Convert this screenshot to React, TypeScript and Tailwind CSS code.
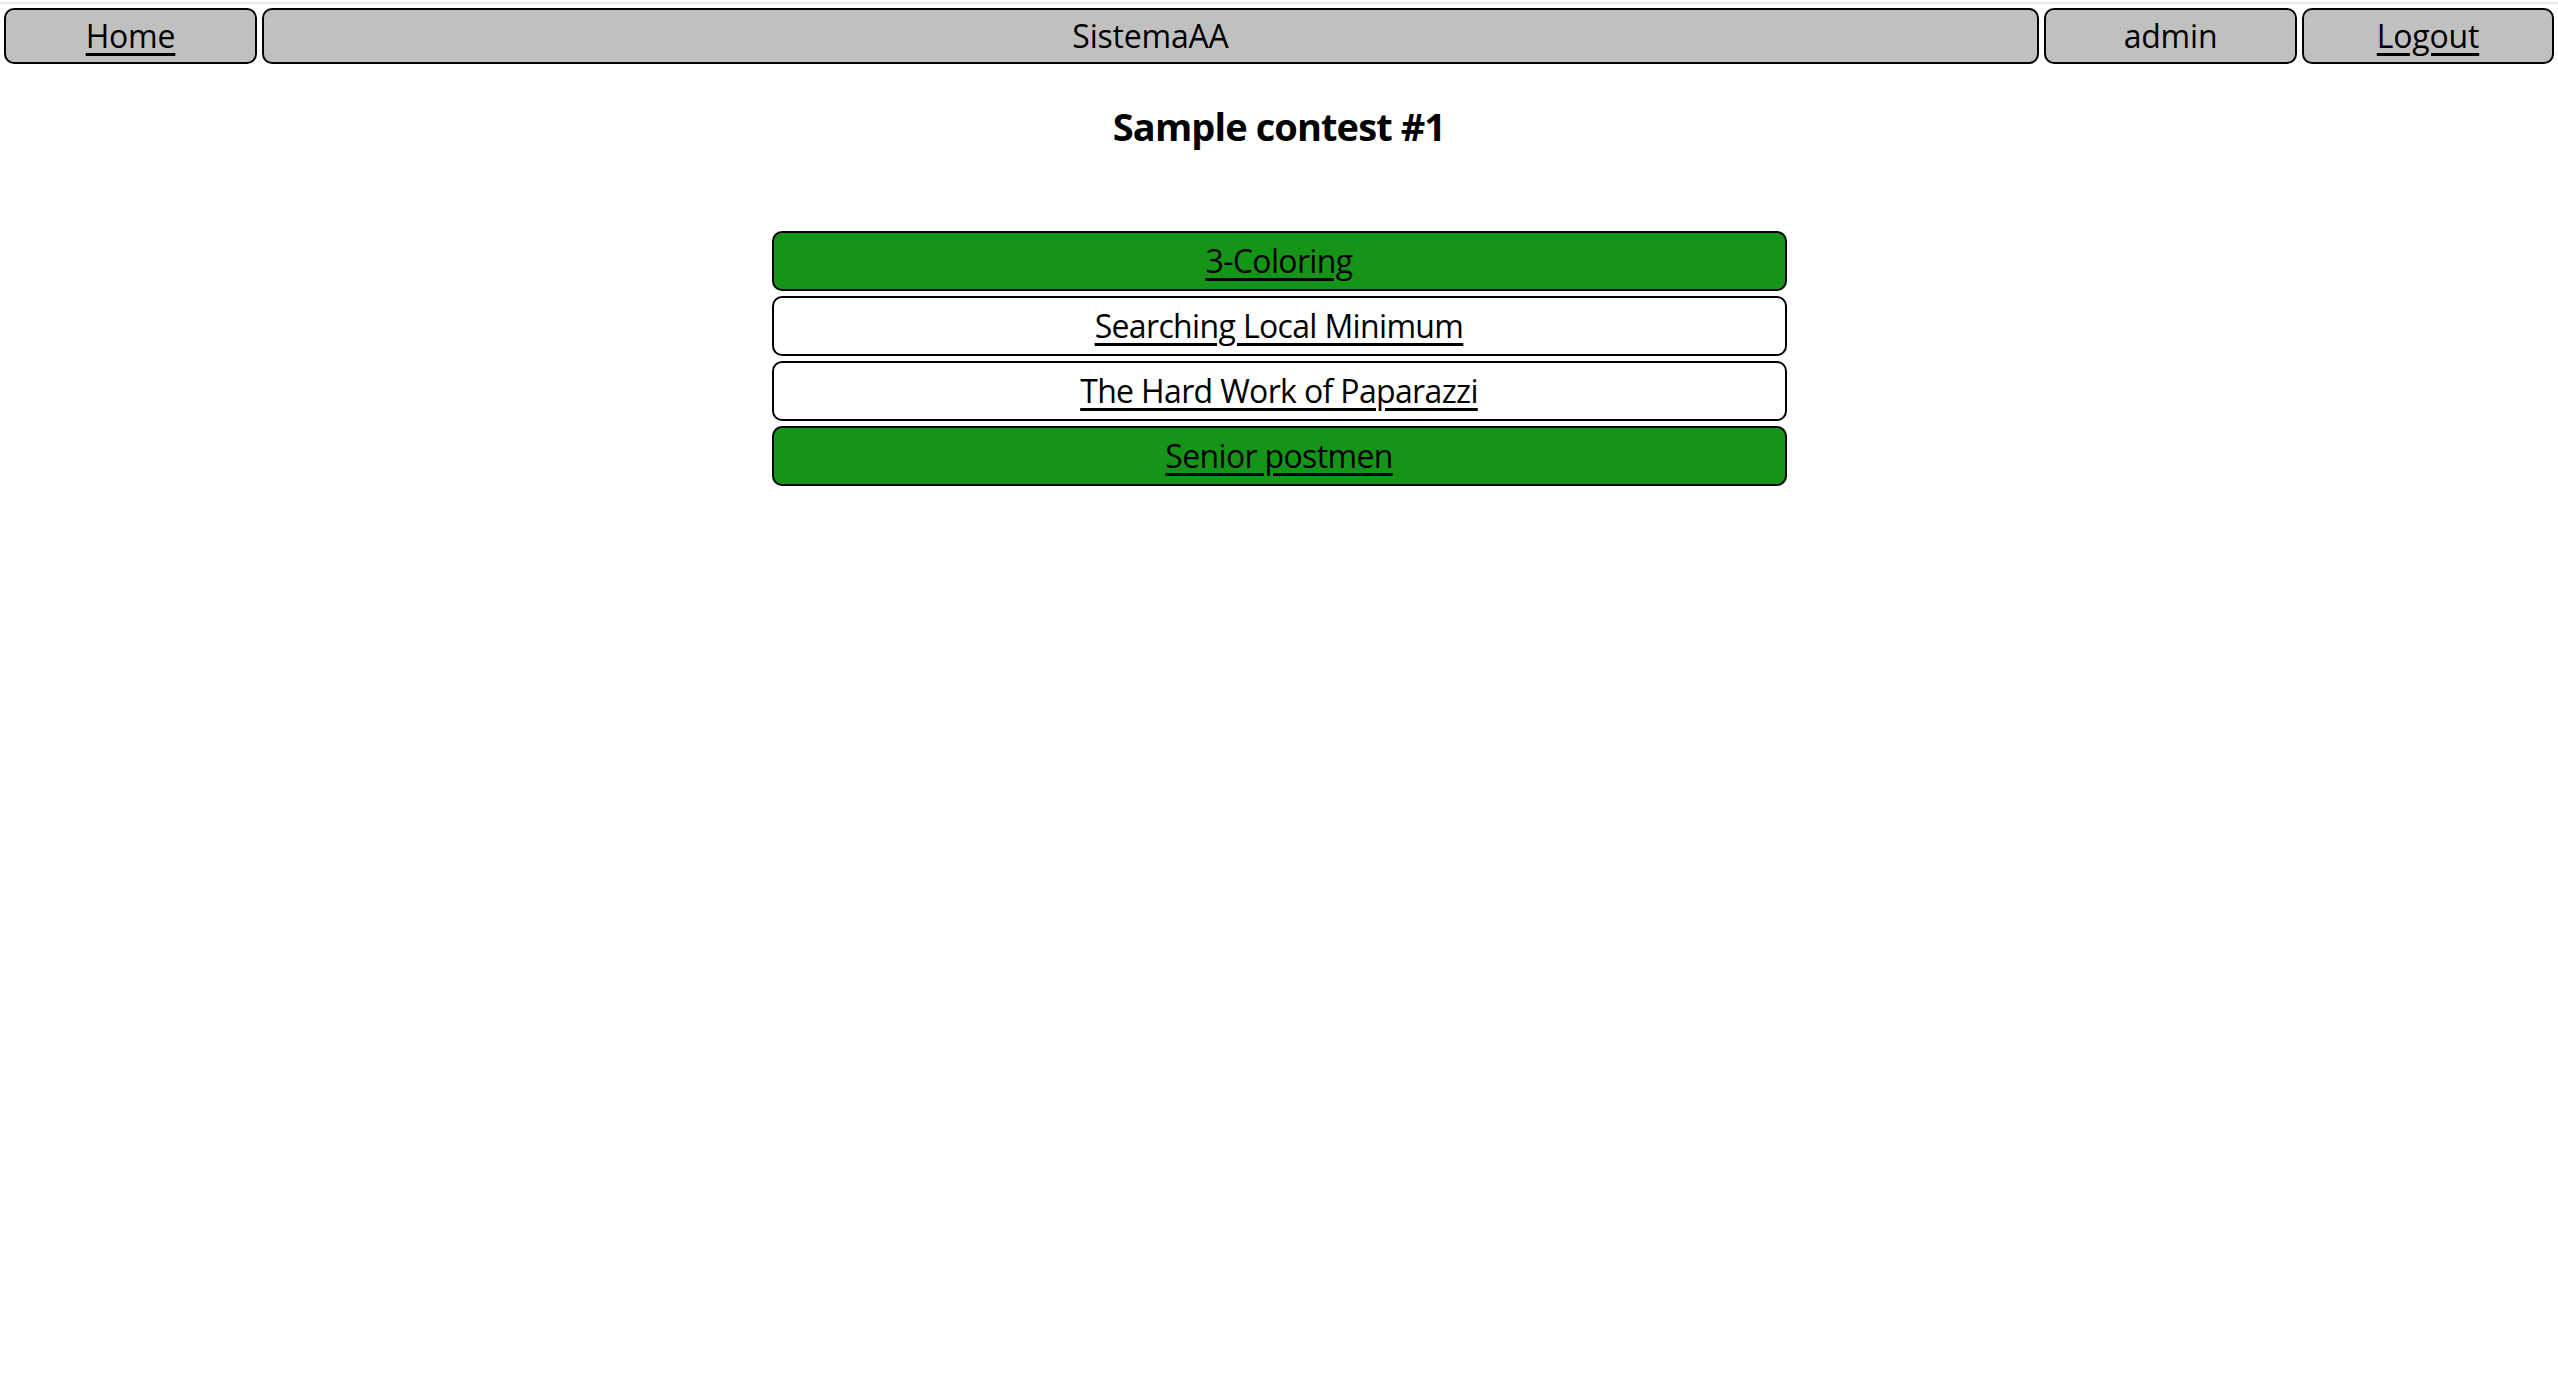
export default function App() {
  const problems = [
    { name: "3-Coloring", solved: true },
    { name: "Searching Local Minimum", solved: false },
    { name: "The Hard Work of Paparazzi", solved: false },
    { name: "Senior postmen", solved: true },
  ];

  return (
    <div className="min-h-screen bg-white text-black" style={{ fontFamily: '"Open Sans", "Noto Sans", sans-serif' }}>
      <div className="h-[2px] mt-[2px] bg-[#ececec]"></div>

      {/* Top bar */}
      <div className="flex gap-[5px] px-[4px] pt-[4px] text-[32px] tracking-[-0.2px]">
        <a href="#" className="w-[253px] h-[56px] flex items-center justify-center bg-[#c0c0c0] border-2 border-black rounded-[10px] underline underline-offset-[5px]">
          Home
        </a>
        <div className="flex-1 h-[56px] flex items-center justify-center bg-[#c0c0c0] border-2 border-black rounded-[10px]">
          SistemaAA
        </div>
        <div className="w-[253px] h-[56px] flex items-center justify-center bg-[#c0c0c0] border-2 border-black rounded-[10px]">
          admin
        </div>
        <a href="#" className="w-[252px] h-[56px] flex items-center justify-center bg-[#c0c0c0] border-2 border-black rounded-[10px] underline underline-offset-[5px]">
          Logout
        </a>
      </div>

      <h2 className="mt-[38px] text-center text-[38px] leading-[48px] font-bold tracking-[-0.9px]">Sample contest #1</h2>

      {/* Problem list */}
      <div className="w-[1015px] mx-auto mt-[81px] flex flex-col gap-[5px]">
        {problems.map((p) => (
          <a
            key={p.name}
            href="#"
            className={
              "h-[60px] flex items-center justify-center border-2 border-black rounded-[10px] text-[32px] tracking-[-0.65px] underline underline-offset-[5px] " +
              (p.solved ? "bg-[#159518]" : "bg-white")
            }
          >
            {p.name}
          </a>
        ))}
      </div>
    </div>
  );
}
